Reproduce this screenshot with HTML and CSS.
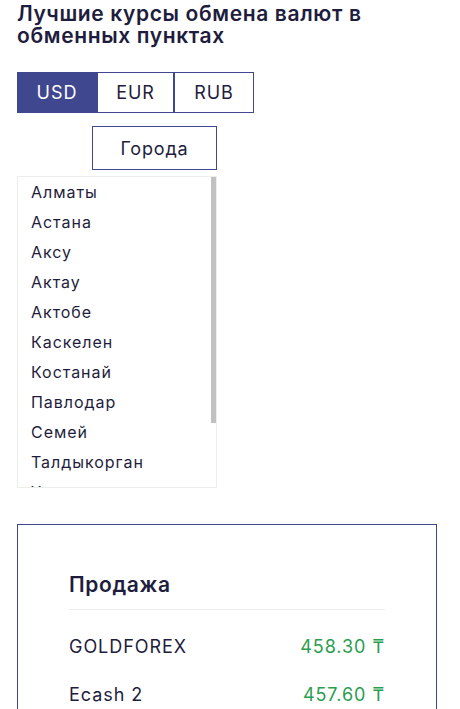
FILE: index.html
```html
<!DOCTYPE html>
<html lang="ru">
<head>
<meta charset="utf-8">
<link rel="stylesheet" href="styles.css">
</head>
<body>
<div class="page">
  <h1 class="title">Лучшие курсы обмена валют в обменных пунктах</h1>
  <div class="tabs">
    <button class="tab active">USD</button>
    <button class="tab">EUR</button>
    <button class="tab">RUB</button>
  </div>
  <button class="cities-btn">Города</button>
  <div class="cities-box">
    <ul class="cities">
      <li>Алматы</li>
      <li>Астана</li>
      <li>Аксу</li>
      <li>Актау</li>
      <li>Актобе</li>
      <li>Каскелен</li>
      <li>Костанай</li>
      <li>Павлодар</li>
      <li>Семей</li>
      <li>Талдыкорган</li>
      <li>Уральск</li>
    </ul>
    <div class="thumb"></div>
  </div>
  <div class="card">
    <h2 class="card-title">Продажа</h2>
    <div class="row"><span class="name">GOLDFOREX</span><span class="rate">458.30 ₸</span></div>
    <div class="row"><span class="name">Ecash 2</span><span class="rate">457.60 ₸</span></div>
  </div>
</div>
</body>
</html>
```

FILE: styles.css
```css
* { box-sizing: border-box; }
html, body { margin: 0; padding: 0; background: #fff; }
body {
  font-family: "Inter", "DejaVu Sans", sans-serif;
  color: #1e1d3d;
  overflow: hidden;
  letter-spacing: 0.06em;
}
.page { padding: 0 17px; }
.title {
  margin: 0;
  padding-top: 3px;
  font-size: 21px;
  line-height: 22px;
  font-weight: 600;
  width: 410px;
  letter-spacing: 0.03em;
  color: #1e1d3d;
}
.tabs {
  display: flex;
  margin-top: 25px;
}
.tab {
  font-family: inherit;
  letter-spacing: inherit;
  font-size: 18px;
  height: 41px;
  padding: 0;
  background: #fff;
  color: #1e1d3d;
  border: 1px solid #3f478f;
  margin: 0;
}
.tab.active { background: #3f478f; color: #fff; width: 80px; }
.tab:nth-child(2) { width: 77px; }
.tab:nth-child(3) { width: 80px; }
.cities-btn {
  display: block;
  margin: 13px 0 0 75px;
  width: 125px;
  height: 44px;
  padding: 0;
  font-family: inherit;
  letter-spacing: 0.045em;
  font-size: 18px;
  color: #1e1d3d;
  background: #fff;
  border: 1px solid #3f478f;
}
.cities-box {
  position: relative;
  margin-top: 6px;
  width: 200px;
  height: 312px;
  border: 1px solid #ededed;
  overflow: hidden;
}
.cities {
  list-style: none;
  margin: 0;
  padding: 0;
}
.cities li {
  height: 30px;
  line-height: 30px;
  padding-left: 13px;
  font-size: 16px;
}
.thumb {
  position: absolute;
  top: 0;
  right: 0;
  width: 5px;
  height: 246px;
  background: #c1c1c1;
}
.card {
  margin-top: 36px;
  width: 420px;
  border: 1px solid #3f478f;
  padding: 45px 51px 40px;
}
.card-title {
  margin: 0;
  font-size: 21px;
  font-weight: 600;
  letter-spacing: 0.03em;
  line-height: 30px;
  padding-bottom: 9px;
  border-bottom: 1px solid #ececec;
}
.row {
  display: flex;
  justify-content: space-between;
  font-size: 18px;
  height: 48px;
  align-items: center;
}
.row:first-of-type { margin-top: 12px; }
.rate { color: #2a9d4f; }
```
